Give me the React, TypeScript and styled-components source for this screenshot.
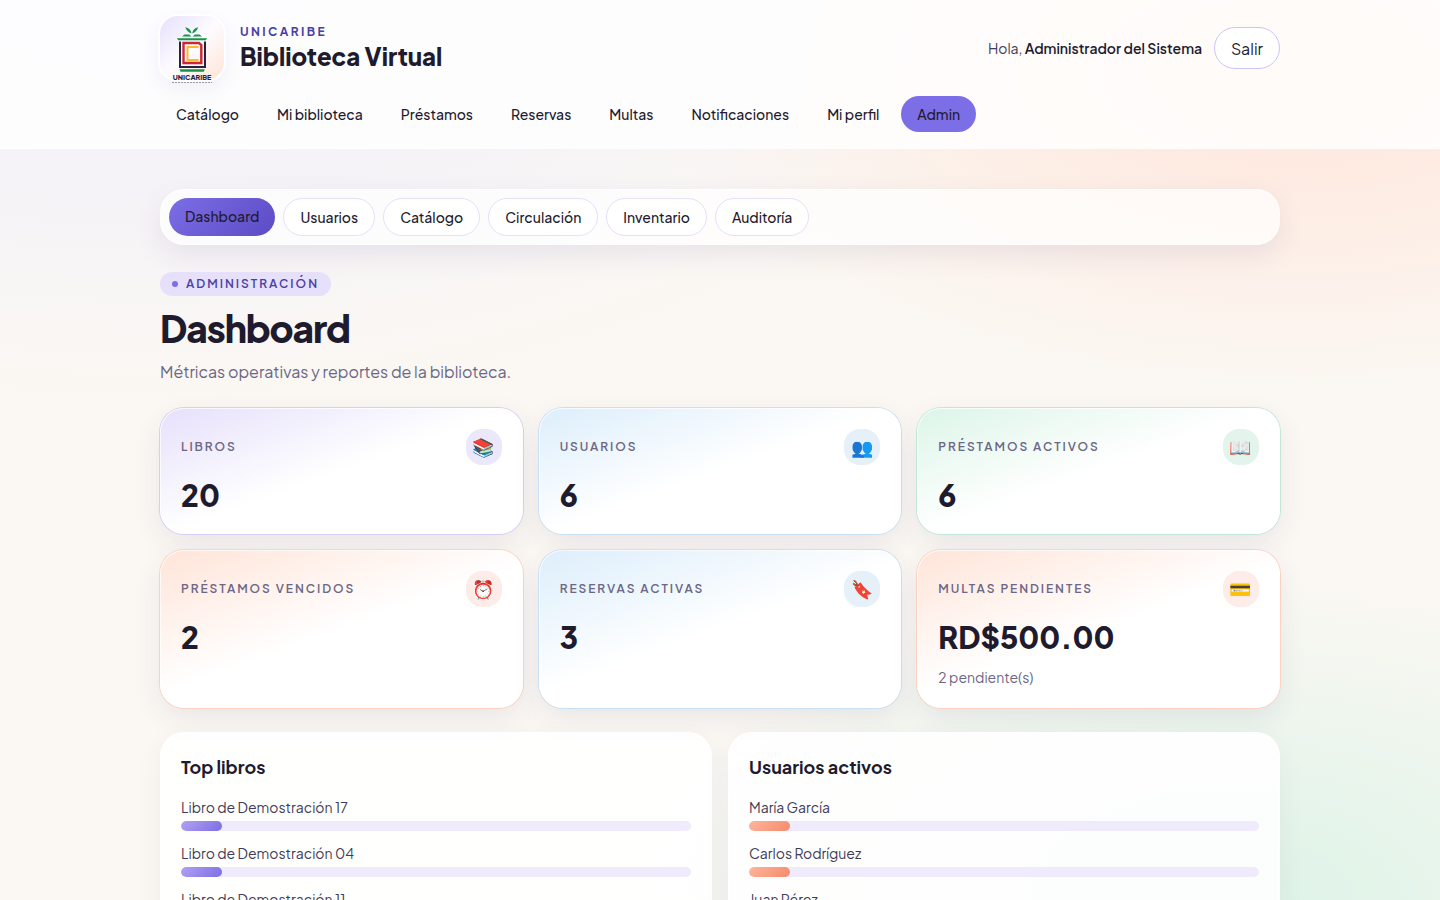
import React from "react";
import styled, { createGlobalStyle, css } from "styled-components";

const ink = "#1e1b2e";
const inkSoft = "#3f3b58";
const muted = "#6b6785";

const GlobalStyle = createGlobalStyle`
  *, *::before, *::after { box-sizing: border-box; }
  body {
    margin: 0;
    min-height: 100vh;
    color: ${ink};
    font-family: "Plus Jakarta Sans", Inter, "Noto Color Emoji", sans-serif;
    font-size: 16px;
    line-height: 24px;
    background:
      radial-gradient(60% 45% at 10% 0%, #f1eefc 0%, rgba(241, 238, 252, 0) 100%),
      radial-gradient(45% 36% at 90% 8%, #ffe5da 0%, rgba(255, 229, 218, 0) 100%),
      radial-gradient(42% 36% at 86% 100%, #ddf3e7 0%, rgba(221, 243, 231, 0) 100%),
      #fbf8f3;
    background-attachment: fixed;
  }
  h1, h2, p, ul { margin: 0; padding: 0; }
  button { font-family: inherit; }
`;

const Header = styled.header`
  padding: 16px 24px;
  background: rgba(255, 255, 255, 0.82);
  border-bottom: 1px solid rgba(255, 255, 255, 0.4);
`;

const Container = styled.div`
  width: 100%;
  max-width: 1120px;
  margin: 0 auto;
`;

const TopRow = styled.div`
  display: flex;
  align-items: center;
  justify-content: space-between;
  gap: 16px;
`;

const Brand = styled.a`
  display: flex;
  align-items: center;
  gap: 16px;
  color: inherit;
  text-decoration: none;
`;

const LogoTile = styled.span`
  display: block;
  width: 64px;
  height: 64px;
  border-radius: 18px;
  background: linear-gradient(135deg, #e6e0fb 0%, #fdfcff 50%, #ffe4d6 100%);
  box-shadow: 0 0 0 2px rgba(255, 255, 255, 0.9), 0 8px 20px rgba(76, 60, 160, 0.08);
`;

const BrandText = styled.span`
  display: flex;
  flex-direction: column;
  padding-bottom: 4px;
`;

const Overline = styled.span`
  color: #4b3fa7;
  font-size: 12px;
  font-weight: 700;
  line-height: 20px;
  letter-spacing: 0.2em;
`;

const BrandName = styled.span`
  font-size: 24px;
  font-weight: 800;
  line-height: 28px;
`;

const Account = styled.div`
  display: flex;
  align-items: center;
  gap: 12px;
  color: ${inkSoft};
  font-size: 14px;
  strong { color: ${ink}; font-weight: 600; }
`;

const LogoutButton = styled.button`
  height: 42px;
  padding: 0 16px;
  border: 1px solid #cfc4f8;
  border-radius: 21px;
  background: #fff;
  color: ${ink};
  font-size: 16px;
  font-weight: 400;
`;

const MainNav = styled.nav`
  display: flex;
  flex-wrap: wrap;
  gap: 6px;
  margin-top: 16px;
`;

const NavLink = styled.a<{ $active?: boolean }>`
  padding: 6px 16px;
  border-radius: 18px;
  background: ${(p) => (p.$active ? "#7c6ee6" : "transparent")};
  color: ${ink};
  font-size: 14px;
  font-weight: 500;
  line-height: 24px;
  text-decoration: none;
`;

const Main = styled.main`
  padding: 40px 24px;
`;

const SubNav = styled.nav`
  display: flex;
  flex-wrap: wrap;
  gap: 8px;
  padding: 8px;
  border: 1px solid rgba(255, 255, 255, 0.8);
  border-radius: 24px;
  background: rgba(255, 255, 255, 0.72);
  box-shadow: 0 10px 28px rgba(60, 45, 110, 0.09);
`;

const SubLink = styled.a<{ $active?: boolean }>`
  padding: 6px 16px;
  border: 1px solid #e6e0fb;
  border-radius: 19px;
  background: #fff;
  color: ${ink};
  font-size: 14px;
  font-weight: 500;
  line-height: 24px;
  text-decoration: none;
  ${(p) =>
    p.$active &&
    css`
      border: 0;
      background: linear-gradient(135deg, #7c6ee6, #5b4bc4);
    `}
`;

const PageHead = styled.div`
  display: flex;
  flex-direction: column;
  align-items: flex-start;
  padding: 27px 0 24px;
`;

const Chip = styled.span`
  display: inline-flex;
  align-items: center;
  gap: 8px;
  padding: 0 12px;
  border-radius: 12px;
  background: #e6e0fb;
  color: #4b3fa7;
  font-size: 12px;
  font-weight: 600;
  line-height: 24px;
  letter-spacing: 2px;
  &::before {
    content: "";
    width: 6px;
    height: 6px;
    border-radius: 3px;
    background: #7c6ee6;
  }
`;

const Title = styled.h1`
  margin-top: 8px;
  font-size: 37px;
  font-weight: 800;
  line-height: 48px;
  letter-spacing: -0.03em;
`;

const Lead = styled.p`
  margin-top: 8px;
  color: ${muted};
`;

type Tone = "lavender" | "sky" | "mint" | "peach";

const tones: Record<Tone, { wash: string; ring: string; icon: string }> = {
  lavender: { wash: "#e6e0fb", ring: "#d6cef4", icon: "#ebe8fb" },
  sky: { wash: "#dceefb", ring: "#c8e0f3", icon: "#e5f0f9" },
  mint: { wash: "#dcf5e8", ring: "#c2e7d7", icon: "#e2f4ec" },
  peach: { wash: "#ffe4d8", ring: "#fad2c2", icon: "#fdece7" },
};

const Stats = styled.div`
  display: grid;
  grid-template-columns: repeat(3, minmax(0, 1fr));
  gap: 16px;
`;

const StatCard = styled.section<{ $tone: Tone }>`
  padding: 20px;
  border: 1px solid rgba(255, 255, 255, 0.7);
  border-radius: 24px;
  background: linear-gradient(160deg, ${(p) => tones[p.$tone].wash} 0%, #fff 50%) border-box;
  box-shadow: 0 0 0 1px ${(p) => tones[p.$tone].ring}, 0 10px 28px rgba(60, 45, 110, 0.09);
`;

const StatHead = styled.div`
  display: flex;
  align-items: center;
  justify-content: space-between;
`;

const StatLabel = styled.h2`
  color: ${muted};
  font-size: 12px;
  font-weight: 600;
  line-height: 20px;
  letter-spacing: 0.16em;
`;

const StatIcon = styled.span<{ $tone: Tone }>`
  display: grid;
  place-items: center;
  width: 36px;
  height: 36px;
  border-radius: 16px;
  background: ${(p) => tones[p.$tone].icon};
  font-size: 18px;
`;

const StatValue = styled.p`
  margin-top: 12px;
  font-size: 30px;
  font-weight: 800;
  line-height: 36px;
`;

const StatHint = styled.p`
  margin-top: 12px;
  color: ${muted};
  font-size: 14px;
  line-height: 20px;
`;

const Panels = styled.div`
  display: grid;
  grid-template-columns: repeat(2, minmax(0, 1fr));
  gap: 16px;
  margin-top: 24px;
`;

const Panel = styled.section`
  padding: 20px;
  border: 1px solid rgba(255, 255, 255, 0.8);
  border-radius: 24px;
  background: rgba(255, 255, 255, 0.88);
  box-shadow: 0 10px 28px rgba(60, 45, 110, 0.06);
`;

const PanelTitle = styled.h2`
  font-size: 18px;
  font-weight: 700;
  line-height: 28px;
`;

const Ranking = styled.ul`
  display: flex;
  flex-direction: column;
  gap: 12px;
  margin-top: 16px;
  list-style: none;
`;

const RankName = styled.span`
  display: block;
  margin-bottom: 4px;
  color: ${inkSoft};
  font-size: 14px;
  line-height: 20px;
`;

const Track = styled.div`
  height: 10px;
  overflow: hidden;
  border-radius: 5px;
  background: #efebfc;
`;

const Fill = styled.div<{ $warm?: boolean }>`
  height: 100%;
  border-radius: 5px;
  background: ${(p) =>
    p.$warm ? "linear-gradient(135deg, #ffb59c, #f58a6c)" : "linear-gradient(135deg, #b3a1f2, #7c6ee6)"};
`;

const Logo = () => (
  <svg width="64" height="72" viewBox="0 0 64 72" role="img" aria-label="Unicaribe" overflow="visible">
    <g fill="#16944a">
      <path d="M25.300 11.300c3.500.6 5.700 2.700 6.200 6.200c-2.200-.5-5-2.700-6.200-6.200zM38.200 11.300c-3.500.6-5.500 2.700-6 6.200c2.200-.5 4.800-2.700 6-6.200z" />
      <path d="M22 20.500l2.500-2h4.500l2.500 2zM32.500 20.500l2.500-2h4.500l2.500 2z" />
      <path d="M16.800 22.300h30.400l-1.500 1.900h-27.400zM19.500 53.300h25.300l-1 2.400h-23.300z" />
    </g>
    <path d="M20 25.500v25.500h25v-25.500" fill="none" stroke="#25233f" strokeWidth="2" />
    <path d="M23.500 27h15.500l2.300 2v18h-17.800z" fill="none" stroke="#cf2635" strokeWidth="2.400" />
    <path d="M38.500 31h-11v13h11" fill="none" stroke="#fbb92d" strokeWidth="2" />
    <text x="32" y="64" textAnchor="middle" fill="#25233f" fontSize="7" fontWeight="800">UNICARIBE</text>
    <path d="M12 66.500h40" stroke="#77758a" strokeWidth="1" strokeDasharray="2 1" opacity=".7" />
  </svg>
);

const navItems = ["Catálogo", "Mi biblioteca", "Préstamos", "Reservas", "Multas", "Notificaciones", "Mi perfil", "Admin"];
const subItems = ["Dashboard", "Usuarios", "Catálogo", "Circulación", "Inventario", "Auditoría"];

const stats: { label: string; value: string; icon: string; tone: Tone; hint?: string }[] = [
  { label: "LIBROS", value: "20", icon: "📚", tone: "lavender" },
  { label: "USUARIOS", value: "6", icon: "👥", tone: "sky" },
  { label: "PRÉSTAMOS ACTIVOS", value: "6", icon: "📖", tone: "mint" },
  { label: "PRÉSTAMOS VENCIDOS", value: "2", icon: "⏰", tone: "peach" },
  { label: "RESERVAS ACTIVAS", value: "3", icon: "🔖", tone: "sky" },
  { label: "MULTAS PENDIENTES", value: "RD$500.00", icon: "💳", tone: "peach", hint: "2 pendiente(s)" },
];

const rankings = [
  {
    title: "Top libros",
    warm: false,
    rows: [
      { name: "Libro de Demostración 17", share: 8 },
      { name: "Libro de Demostración 04", share: 8 },
      { name: "Libro de Demostración 11", share: 8 },
    ],
  },
  {
    title: "Usuarios activos",
    warm: true,
    rows: [
      { name: "María García", share: 8 },
      { name: "Carlos Rodríguez", share: 8 },
      { name: "Juan Pérez", share: 8 },
    ],
  },
];

export default function App() {
  return (
    <>
      <GlobalStyle />
      <Header>
        <Container>
          <TopRow>
            <Brand href="#">
              <LogoTile>
                <Logo />
              </LogoTile>
              <BrandText>
                <Overline>UNICARIBE</Overline>
                <BrandName>Biblioteca Virtual</BrandName>
              </BrandText>
            </Brand>
            <Account>
              <span>
                Hola, <strong>Administrador del Sistema</strong>
              </span>
              <LogoutButton type="button">Salir</LogoutButton>
            </Account>
          </TopRow>
          <MainNav aria-label="Principal">
            {navItems.map((item) => (
              <NavLink key={item} href="#" $active={item === "Admin"}>
                {item}
              </NavLink>
            ))}
          </MainNav>
        </Container>
      </Header>
      <Main>
        <Container>
          <SubNav aria-label="Administración">
            {subItems.map((item) => (
              <SubLink key={item} href="#" $active={item === "Dashboard"}>
                {item}
              </SubLink>
            ))}
          </SubNav>
          <PageHead>
            <Chip>ADMINISTRACIÓN</Chip>
            <Title>Dashboard</Title>
            <Lead>Métricas operativas y reportes de la biblioteca.</Lead>
          </PageHead>
          <Stats>
            {stats.map((s) => (
              <StatCard key={s.label} $tone={s.tone}>
                <StatHead>
                  <StatLabel>{s.label}</StatLabel>
                  <StatIcon $tone={s.tone} aria-hidden="true">
                    {s.icon}
                  </StatIcon>
                </StatHead>
                <StatValue>{s.value}</StatValue>
                {s.hint && <StatHint>{s.hint}</StatHint>}
              </StatCard>
            ))}
          </Stats>
          <Panels>
            {rankings.map((r) => (
              <Panel key={r.title}>
                <PanelTitle>{r.title}</PanelTitle>
                <Ranking>
                  {r.rows.map((row) => (
                    <li key={row.name}>
                      <RankName>{row.name}</RankName>
                      <Track>
                        <Fill $warm={r.warm} style={{ width: `${row.share}%` }} />
                      </Track>
                    </li>
                  ))}
                </Ranking>
              </Panel>
            ))}
          </Panels>
        </Container>
      </Main>
    </>
  );
}
